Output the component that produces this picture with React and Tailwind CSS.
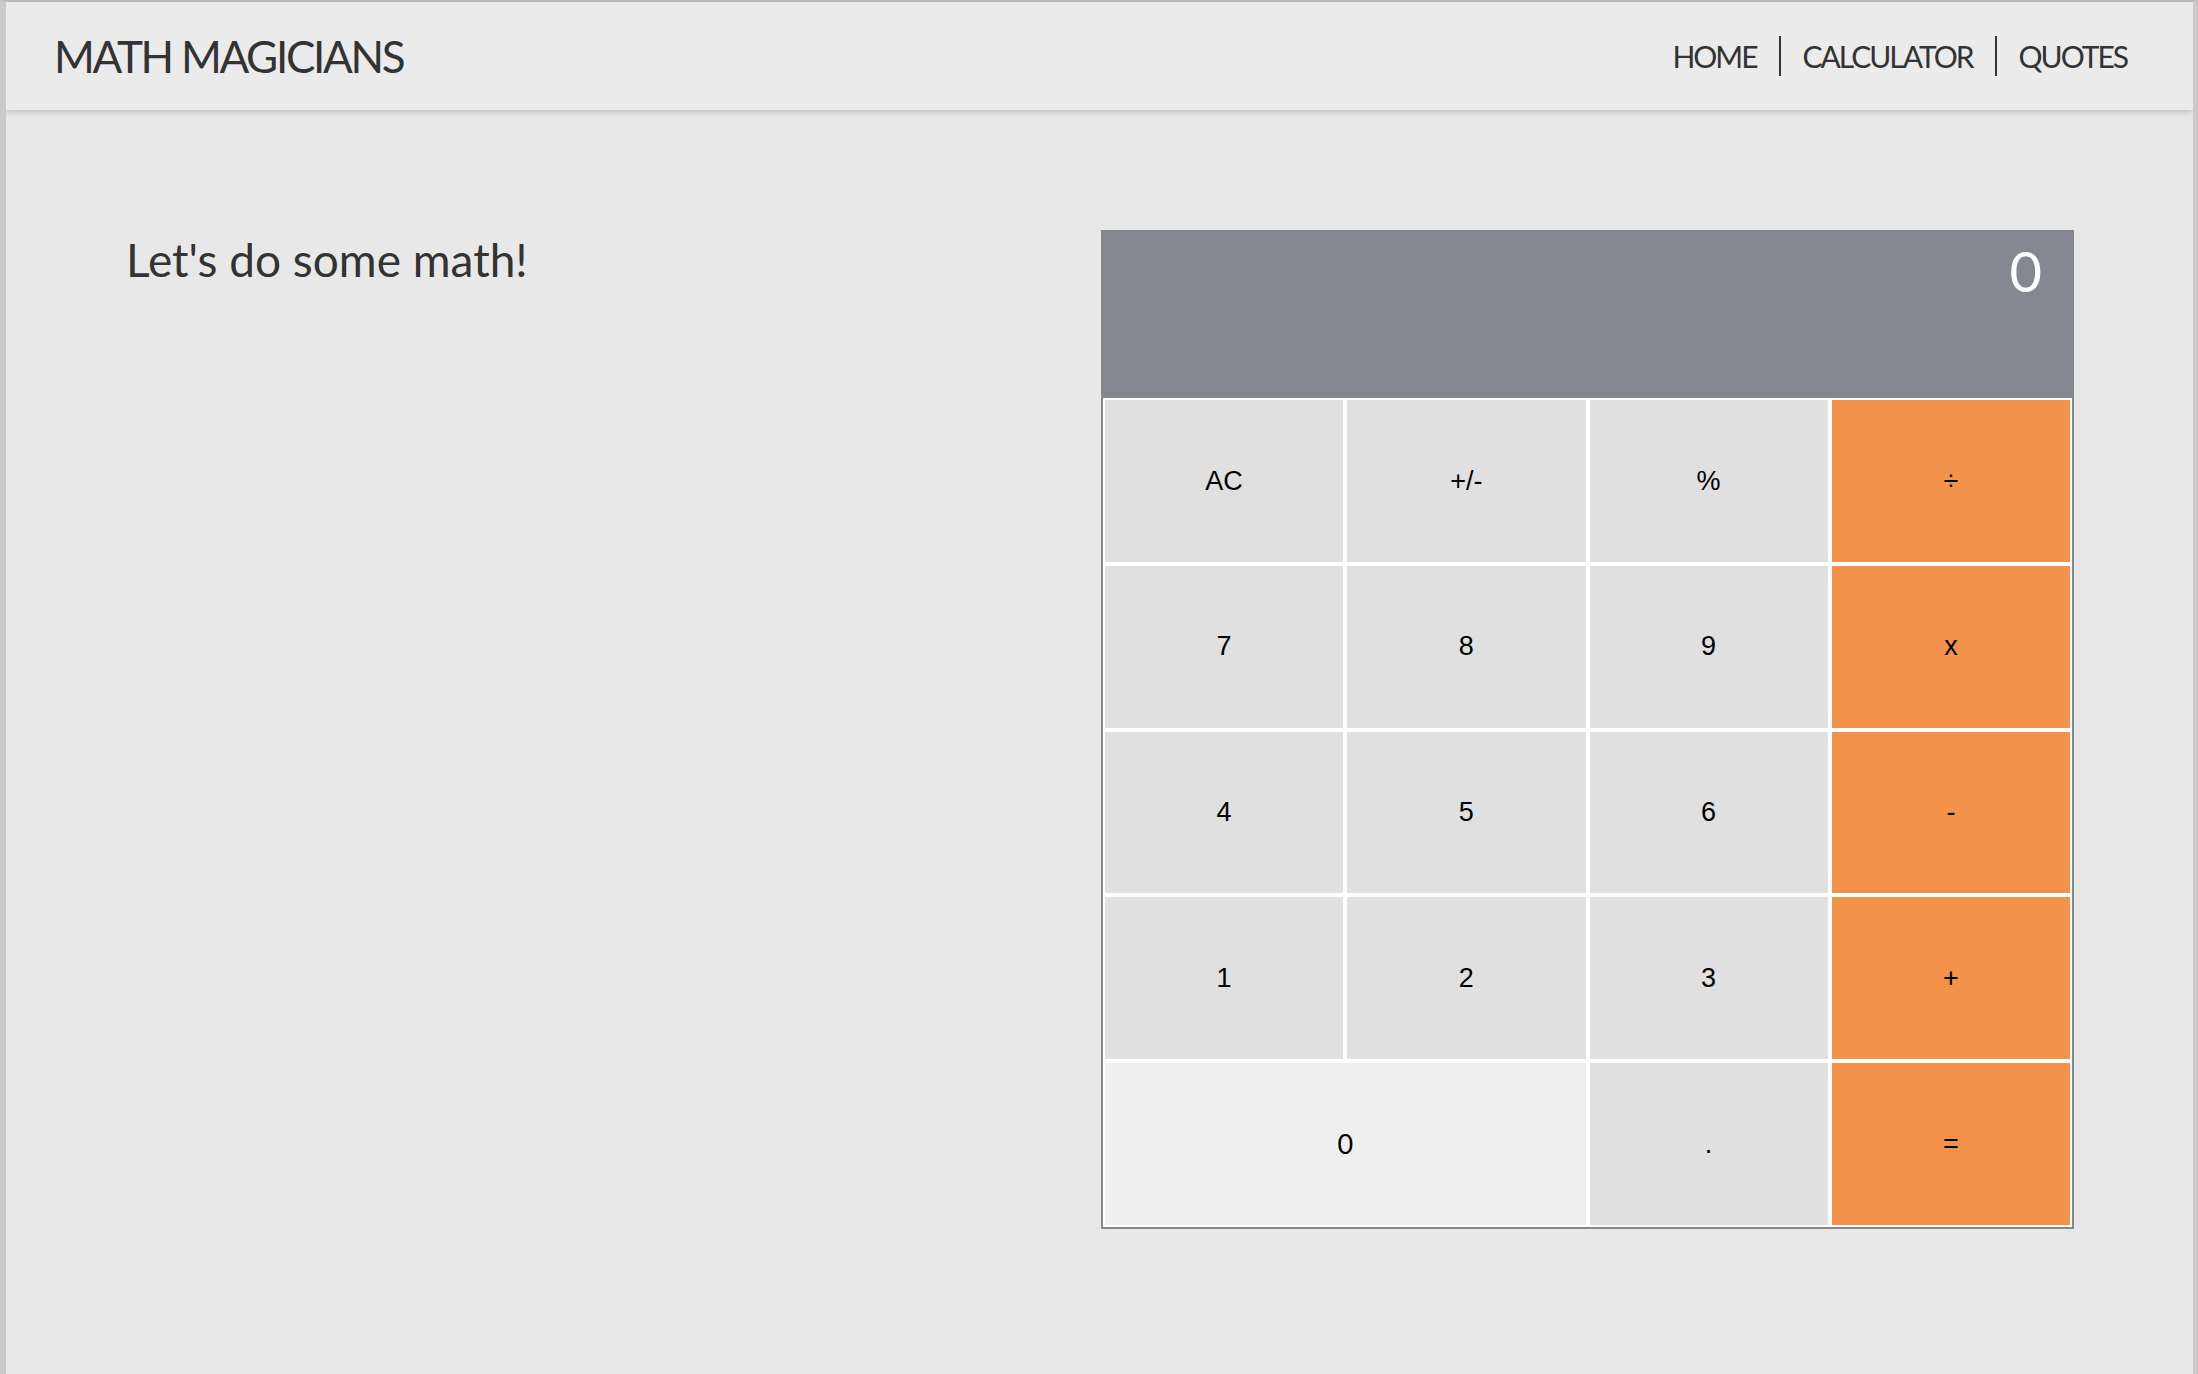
import React from 'react';

const keys = [
  { label: 'AC' },
  { label: '+/-' },
  { label: '%' },
  { label: '÷', op: true },
  { label: '7' },
  { label: '8' },
  { label: '9' },
  { label: 'x', op: true },
  { label: '4' },
  { label: '5' },
  { label: '6' },
  { label: '-', op: true },
  { label: '1' },
  { label: '2' },
  { label: '3' },
  { label: '+', op: true },
  { label: '0', zero: true },
  { label: '.' },
  { label: '=', op: true },
];

function Key({ label, op, zero }) {
  let cls = 'flex items-center justify-center border-2 border-white text-[27px] text-black font-["Liberation_Sans",Arial,sans-serif] bg-[#e0e0e0]';
  if (op) cls = 'flex items-center justify-center border-2 border-white text-[27px] text-black font-["Liberation_Sans",Arial,sans-serif] bg-[#f3924a]';
  if (zero) cls = 'col-span-2 flex items-center justify-center border-2 border-white text-[27px] text-black font-[Lato,sans-serif] bg-[#efefef]';
  return (
    <button type="button" className={cls}>
      {label}
    </button>
  );
}

function Calculator() {
  return (
    <div className="w-[973px] border-x-2 border-b-2 border-[#888]">
      {/* display */}
      <div className="h-[168px] bg-[#858793] pr-[30px] pt-[13px] text-right text-[56px] leading-none text-white font-[Lato,sans-serif]">
        0
      </div>
      <div className="grid h-[829px] grid-cols-4 grid-rows-5">
        {keys.map((k) => (
          <Key key={k.label + (k.zero ? 'z' : '')} {...k} />
        ))}
      </div>
    </div>
  );
}

export default function App() {
  return (
    <div className="h-[1374px] border-t-2 border-l-[6px] border-r-[5px] border-t-[#b9b9b9] border-x-[#cbc9ca] bg-[#e8e8e8] text-[#333] font-[Lato,sans-serif] overflow-hidden">
      <header className="relative z-10 flex h-[108px] items-center justify-between bg-[#ebebeb] pl-[48px] pr-[44px] shadow-[0_2px_6px_rgba(0,0,0,0.18)]">
        <h1 className="text-[44px] leading-none tracking-[-2.3px]">MATH MAGICIANS</h1>
        <nav>
          <ul className="flex text-[30px] leading-[40px] tracking-[-2px]">
            <li className="px-[22px]">HOME</li>
            <li className="border-l-2 border-[#333] px-[22px]">CALCULATOR</li>
            <li className="border-l-2 border-[#333] px-[22px]">QUOTES</li>
          </ul>
        </nav>
      </header>

      <main className="flex items-start justify-between pl-[120px] pr-[119px] pt-[120px]">
        <h2 className="pt-[1px] text-[46px] leading-tight">Let's do some math!</h2>
        <Calculator />
      </main>
    </div>
  );
}
